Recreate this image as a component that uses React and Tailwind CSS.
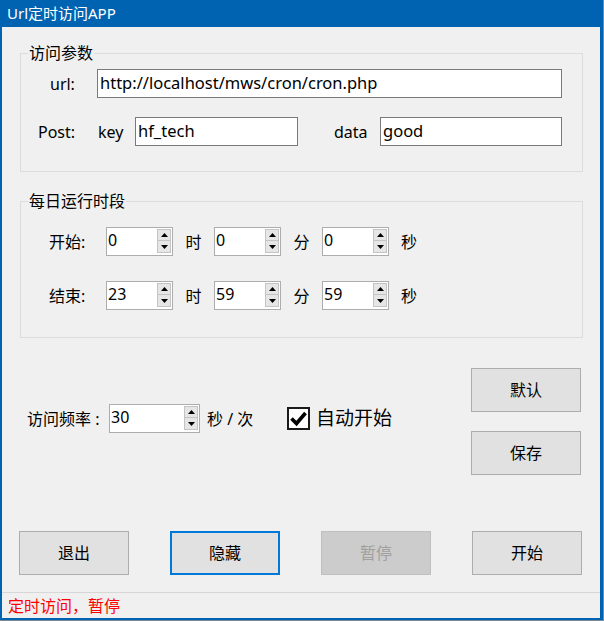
import React from "react";

function Arrow({ down }) {
  return (
    <svg width="7" height="4" viewBox="0 0 7 4" className="block">
      {down ? <polygon points="0,0 7,0 3.5,4" fill="#000" /> : <polygon points="0,4 7,4 3.5,0" fill="#000" />}
    </svg>
  );
}

function Spin({ value, wClass }) {
  return (
    <div className={"flex h-[29px] border border-[#adadad] bg-white " + wClass}>
      <span className="flex-1 pl-[1px] text-[16px] leading-[25px] text-black">{value}</span>
      <div className="mr-[1px] mt-[1px] flex w-[14px] flex-col">
        <div className="flex h-[12px] items-center justify-center border border-[#c4c4c4] bg-[#e6e6e6]">
          <Arrow />
        </div>
        <div className="flex h-[12px] items-center justify-center border border-t-0 border-[#c4c4c4] bg-[#e6e6e6]">
          <Arrow down />
        </div>
      </div>
    </div>
  );
}

function TextBox({ value, wClass }) {
  return (
    <div className={"flex h-[29px] items-center border border-[#7a7a7a] bg-white pl-[2px] text-[16.5px] text-black " + wClass}>
      {value}
    </div>
  );
}

function Btn({ children, variant }) {
  if (variant === "focus")
    return (
      <div className="flex h-[44px] w-[110px] items-center justify-center border-2 border-[#0078d7] bg-[#e1e1e1] text-[16px] text-black">
        {children}
      </div>
    );
  if (variant === "disabled")
    return (
      <div className="flex h-[44px] w-[110px] items-center justify-center border border-[#bfbfbf] bg-[#cccccc] text-[16px] text-[#a0a0a0]">
        {children}
      </div>
    );
  return (
    <div className="flex h-[44px] w-[110px] items-center justify-center border border-[#adadad] bg-[#e1e1e1] text-[16px] text-black">
      {children}
    </div>
  );
}

export default function App() {
  return (
    <div className="h-[621px] w-[604px] bg-[#7d8a96] [font-family:'Noto_Sans','Noto_Sans_CJK_SC',sans-serif]">
      <div className="flex h-[620px] w-[603px] flex-col bg-[#0063b1] pb-[2px] pl-[2px] pr-[3px]">
        <div className="flex h-[27px] items-center pl-[5px] text-[15px] text-white">Url定时访问APP</div>
        <div className="flex flex-1 flex-col bg-[#f0f0f0]">
          {/* group 1 */}
          <div className="relative ml-[18px] mt-[26px] h-[119px] w-[563px] border border-[#dcdcdc] pt-[15px]">
            <span className="absolute left-[7px] top-[-11px] bg-[#f0f0f0] px-[1px] text-[16px] leading-[20px] text-black">访问参数</span>
            <div className="flex items-center pl-[29px]">
              <span className="w-[47px] text-[16px] text-black">url:</span>
              <TextBox value="http://localhost/mws/cron/cron.php" wClass="w-[465px]" />
            </div>
            <div className="mt-[19px] flex items-center pl-[17px]">
              <span className="w-[60px] text-[16px] text-black">Post:</span>
              <span className="w-[37px] text-[16px] text-black">key</span>
              <TextBox value="hf_tech" wClass="w-[163px]" />
              <span className="ml-[36px] w-[46px] text-[16px] text-black">data</span>
              <TextBox value="good" wClass="w-[182px]" />
            </div>
          </div>
          {/* group 2 */}
          <div className="relative ml-[18px] mt-[29px] h-[137px] w-[563px] border border-[#dcdcdc] pt-[25px]">
            <span className="absolute left-[7px] top-[-11px] bg-[#f0f0f0] px-[1px] text-[16px] leading-[20px] text-black">每日运行时段</span>
            {[["开始:", "0", "0", "0"], ["结束:", "23", "59", "59"]].map((r, i) => (
              <div key={i} className={"flex items-center pl-[28px] " + (i === 1 ? "mt-[25px]" : "")}>
                <span className="w-[57px] text-[16px] text-black">{r[0]}</span>
                <Spin value={r[1]} wClass="w-[67px]" />
                <span className="w-[41px] text-center text-[16px] text-black">时</span>
                <Spin value={r[2]} wClass="w-[67px]" />
                <span className="w-[41px] text-center text-[16px] text-black">分</span>
                <Spin value={r[3]} wClass="w-[67px]" />
                <span className="ml-[12px] text-[16px] text-black">秒</span>
              </div>
            ))}
          </div>
          {/* middle */}
          <div className="mt-[30px] flex">
            <div className="flex flex-1 items-start pl-[25px] pt-[36px]">
              <div className="flex items-center">
                <span className="w-[82px] text-[16px] text-black">访问频率 :</span>
                <Spin value="30" wClass="w-[91px]" />
                <span className="ml-[7px] w-[80px] text-[16px] text-black">秒 / 次</span>
                <div className="flex h-[23px] w-[23px] items-center justify-center border-2 border-[#1a1a1a] bg-white">
                  <svg width="19" height="19" viewBox="0 0 19 19">
                    <path d="M2.5 9.5 L7.5 14.5 L16.5 4" fill="none" stroke="#000" strokeWidth="3.6" />
                  </svg>
                </div>
                <span className="ml-[6px] text-[19px] text-black">自动开始</span>
              </div>
            </div>
            <div className="mr-[19px] flex flex-col gap-[19px]">
              <Btn>默认</Btn>
              <Btn>保存</Btn>
            </div>
          </div>
          {/* bottom buttons */}
          <div className="mt-[56px] flex gap-[41px] pl-[17px]">
            <Btn>退出</Btn>
            <Btn variant="focus">隐藏</Btn>
            <Btn variant="disabled">暂停</Btn>
            <Btn>开始</Btn>
          </div>
          <div className="mt-auto flex h-[26px] items-center border-t border-[#d7d7d7] pl-[6px] text-[16px] text-[#ff0000]">
            定时访问，暂停
          </div>
        </div>
      </div>
    </div>
  );
}
